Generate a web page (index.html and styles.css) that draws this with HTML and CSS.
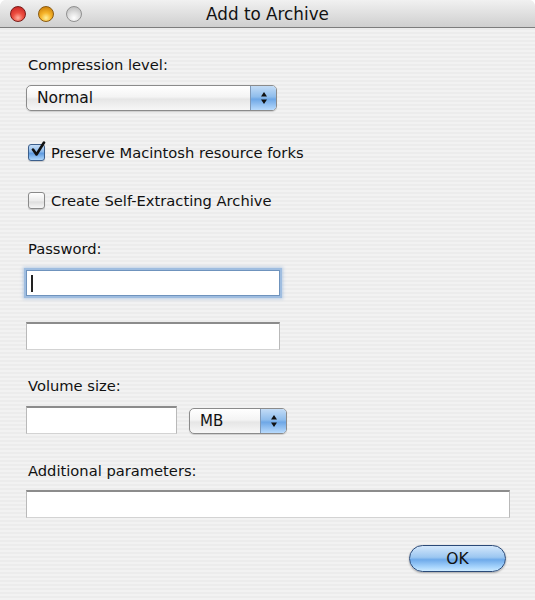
FILE: index.html
```html
<!DOCTYPE html>
<html>
<head>
<meta charset="utf-8">
<link rel="stylesheet" href="styles.css">
</head>
<body>
<div class="window">
  <div class="titlebar">
    <div class="lights">
      <span class="light red"></span>
      <span class="light orange"></span>
      <span class="light gray"></span>
    </div>
    <div class="title">Add to Archive</div>
  </div>
  <div class="content">
    <div class="label lbl-compression">Compression level:</div>
    <div class="popup popup-wide">
      <span class="popup-text">Normal</span>
      <span class="stepper">
        <svg width="8" height="14" viewBox="0 0 8 14"><path d="M4 1 L7 5.5 L1 5.5 Z M4 13 L7 8.5 L1 8.5 Z" fill="#111"/></svg>
      </span>
    </div>
    <div class="check-row row-preserve">
      <span class="checkbox checked">
        <svg width="18" height="18" viewBox="0 0 18 18"><path d="M4 8.5 L7.5 13.5 L15 1.5" fill="none" stroke="#111" stroke-width="2.6" stroke-linecap="round" stroke-linejoin="round"/></svg>
      </span>
      <span class="check-text">Preserve Macintosh resource forks</span>
    </div>
    <div class="check-row row-sfx">
      <span class="checkbox"></span>
      <span class="check-text">Create Self-Extracting Archive</span>
    </div>
    <div class="label lbl-password">Password:</div>
    <div class="field field-focus"><span class="caret"></span></div>
    <div class="field field-pass2"></div>
    <div class="label lbl-volume">Volume size:</div>
    <div class="volume-row">
      <div class="field field-volume"></div>
      <div class="popup popup-small">
        <span class="popup-text">MB</span>
        <span class="stepper">
          <svg width="8" height="14" viewBox="0 0 8 14"><path d="M4 1 L7 5.5 L1 5.5 Z M4 13 L7 8.5 L1 8.5 Z" fill="#111"/></svg>
        </span>
      </div>
    </div>
    <div class="label lbl-additional">Additional parameters:</div>
    <div class="field field-additional"></div>
    <div class="button-row">
      <div class="ok-button">OK</div>
    </div>
  </div>
</div>
</body>
</html>
```

FILE: styles.css
```css
html, body {
  margin: 0;
  padding: 0;
  background: #ffffff;
}
body {
  font-family: "DejaVu Sans", "Verdana", sans-serif;
  color: #111;
}
.window {
  width: 535px;
  height: 600px;
  overflow: hidden;
  background: repeating-linear-gradient(180deg, #ececec 0px, #ececec 2px, #f2f2f2 2px, #f2f2f2 4px);
  border-radius: 6px 6px 0 0;
}
.titlebar {
  height: 27px;
  border-bottom: 1px solid #7d7d7d;
  background: linear-gradient(180deg, #f1f1f1 0%, #e0e0e0 50%, #cfcfcf 100%);
  border-radius: 6px 6px 0 0;
  display: flex;
  align-items: center;
  position: relative;
}
.lights {
  display: flex;
  gap: 12px;
  padding-left: 10px;
  padding-top: 1px;
}
.light {
  width: 16px;
  height: 16px;
  border-radius: 50%;
  box-sizing: border-box;
}
.red {
  background: radial-gradient(circle at 50% 78%, #ffb0a0 0%, #ee4e40 40%, #c01c1e 100%);
  border: 1px solid #7a1b18;
}
.orange {
  background: radial-gradient(circle at 50% 78%, #fff09a 0%, #f6b42a 40%, #c27300 100%);
  border: 1px solid #8a5a10;
}
.gray {
  background: radial-gradient(circle at 50% 78%, #ffffff 0%, #e2e2e2 40%, #b3b3b3 100%);
  border: 1px solid #909090;
}
.title {
  position: absolute;
  left: 0;
  right: 0;
  top: 4px;
  text-align: center;
  font-size: 16.8px;
  color: #111;
}
.content {
  padding: 0 26px 0 26px;
  display: flex;
  flex-direction: column;
  align-items: flex-start;
}
.label {
  font-size: 14.7px;
  line-height: 18px;
  padding-left: 2px;
}
.lbl-compression { margin-top: 28px; }
.popup {
  height: 26px;
  box-sizing: border-box;
  border: 1px solid #8b8b8b;
  border-radius: 5px;
  background: linear-gradient(180deg, #ffffff 0%, #f4f4f4 45%, #e6e6e6 55%, #f7f7f7 100%);
  display: flex;
  align-items: center;
  justify-content: space-between;
  overflow: hidden;
  box-shadow: 0 1px 1px rgba(0,0,0,0.15);
}
.popup-wide {
  width: 251px;
  margin-top: 11px;
}
.popup-text {
  font-size: 15.5px;
  padding-left: 10px;
}
.stepper {
  width: 25px;
  height: 100%;
  background: linear-gradient(180deg, #c3dcf6 0%, #8fbdec 45%, #6ea7e6 55%, #b8dafc 100%);
  border-left: 1px solid #7f99b8;
  display: flex;
  align-items: center;
  justify-content: center;
}
.check-row {
  display: flex;
  align-items: center;
  gap: 6px;
  height: 18px;
  padding-left: 2px;
}
.row-preserve { margin-top: 32px; }
.row-sfx { margin-top: 30px; }
.checkbox {
  width: 17px;
  height: 17px;
  box-sizing: border-box;
  border-radius: 3px;
  border: 1px solid #8a8a8a;
  background: linear-gradient(180deg, #ffffff 0%, #ececec 50%, #dedede 60%, #f6f6f6 100%);
  position: relative;
  box-shadow: 0 1px 1px rgba(0,0,0,0.15);
}
.checkbox.checked {
  border-color: #3c5f8c;
  background: linear-gradient(180deg, #c6def7 0%, #8ab8ea 45%, #5d9ae0 55%, #aed6fb 100%);
}
.checkbox svg {
  position: absolute;
  left: 0px;
  top: -4px;
}
.check-text {
  font-size: 14.7px;
}
.lbl-password { margin-top: 31px; }
.field {
  height: 28px;
  box-sizing: border-box;
  background: #ffffff;
  border: 1px solid #b9b9b9;
  border-top: 2px solid #8c8c8c;
  border-bottom-color: #d3d3d3;
}
.field-focus {
  width: 254px;
  height: 26px;
  margin-top: 12px;
  border: 1px solid #6f93bd;
  box-shadow: 0 0 0 2px #9fbde0, 0 0 3px 3px rgba(120,160,210,0.45);
  display: flex;
  align-items: center;
  padding-left: 4px;
}
.caret {
  width: 2px;
  height: 17px;
  background: #222;
}
.field-pass2 {
  width: 254px;
  margin-top: 26px;
}
.lbl-volume { margin-top: 27px; }
.volume-row {
  display: flex;
  align-items: flex-start;
  gap: 12px;
  margin-top: 11px;
}
.field-volume {
  width: 151px;
}
.popup-small {
  width: 98px;
  margin-top: 2px;
}
.popup-small .popup-text {
  font-size: 15px;
}
.lbl-additional { margin-top: 28px; }
.field-additional {
  width: 484px;
  margin-top: 10px;
}
.button-row {
  align-self: stretch;
  display: flex;
  justify-content: flex-end;
  padding-right: 3px;
  margin-top: 27px;
}
.ok-button {
  width: 97px;
  height: 27px;
  box-sizing: border-box;
  border: 1px solid #2b4a78;
  border-radius: 14px;
  background: linear-gradient(180deg, #d3e7fb 0%, #9cc7f1 45%, #6eaaea 55%, #a9d6fd 85%, #cbe9ff 100%);
  display: flex;
  align-items: center;
  justify-content: center;
  font-size: 15.5px;
  box-shadow: 0 1px 2px rgba(0,0,0,0.3);
}
```
